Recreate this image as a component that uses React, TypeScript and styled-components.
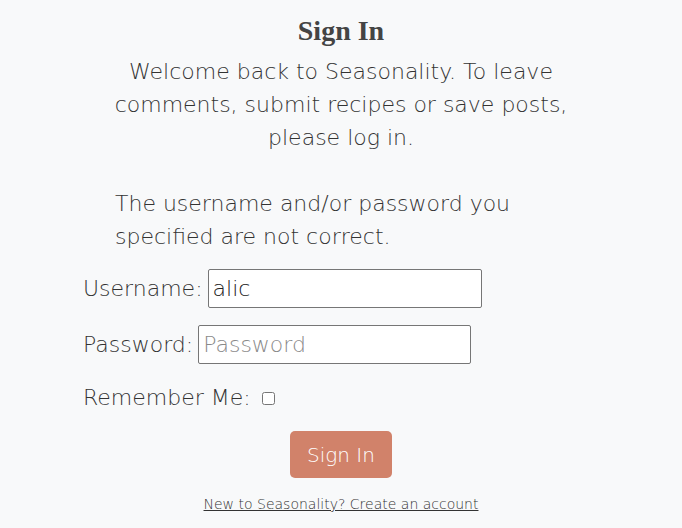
import styled, { createGlobalStyle } from "styled-components";

const GlobalStyle = createGlobalStyle`
  body {
    margin: 0;
    background: #f8f9fa;
    color: #333;
    font-family: "DejaVu Sans", "Open Sans", sans-serif;
    font-weight: 200;
  }
`;

const Container = styled.main`
  width: 516px;
  margin: 0 auto;
  padding: 14px 12px 0;
`;

const Title = styled.h2`
  margin: 0 0 8px;
  text-align: center;
  font-family: "Liberation Serif", "DejaVu Serif", serif;
  font-weight: 700;
  font-size: 28px;
  line-height: 33px;
  color: #444;
`;

const Intro = styled.p`
  margin: 0 0 33px;
  text-align: center;
  font-size: 22px;
  line-height: 33px;
`;

const ErrorList = styled.ul`
  list-style: none;
  margin: 0 0 16px;
  padding-left: 32px;
  font-size: 22px;
  line-height: 33px;
`;

const Form = styled.form`
  display: flex;
  flex-direction: column;
`;

const FieldRow = styled.p`
  display: flex;
  align-items: center;
  gap: 5px;
  margin: 0 0 17px;
  font-size: 22px;
  line-height: 33px;
`;

const Input = styled.input<{ $width: number }>`
  box-sizing: border-box;
  width: ${(p) => p.$width}px;
  height: 39px;
  padding: 0 4px;
  border: 1px solid #767676;
  border-radius: 2px;
  background: #fff;
  font-family: inherit;
  font-weight: 200;
  font-size: 22px;
  color: #222;

  &::placeholder {
    color: #8a8a8a;
  }
`;

const Checkbox = styled.input`
  width: 13px;
  height: 13px;
  margin: 2px 0 0 6px;
`;

const Submit = styled.button`
  align-self: center;
  margin-top: 0;
  width: 102px;
  height: 47px;
  border: none;
  border-radius: 5px;
  background: #d1826a;
  color: #fff;
  font-family: inherit;
  font-weight: 200;
  font-size: 20px;
  cursor: pointer;
`;

const SignupLink = styled.a`
  display: block;
  margin-top: 18px;
  text-align: center;
  font-size: 14px;
  color: #333;
  text-decoration: underline;
`;

export default function App() {
  return (
    <>
      <GlobalStyle />
      <Container>
        <Title>Sign In</Title>
        <Intro>
          Welcome back to Seasonality. To leave comments, submit recipes or
          save posts, please log in.
        </Intro>
        <ErrorList>
          <li>The username and/or password you specified are not correct.</li>
        </ErrorList>
        <Form onSubmit={(e) => e.preventDefault()}>
          <FieldRow>
            <label htmlFor="id_login">Username:</label>
            <Input id="id_login" $width={274} defaultValue="alic" />
          </FieldRow>
          <FieldRow>
            <label htmlFor="id_password">Password:</label>
            <Input
              id="id_password"
              type="password"
              $width={273}
              placeholder="Password"
            />
          </FieldRow>
          <FieldRow>
            <label htmlFor="id_remember">Remember Me:</label>
            <Checkbox id="id_remember" type="checkbox" />
          </FieldRow>
          <Submit type="submit">Sign In</Submit>
        </Form>
        <SignupLink href="#">New to Seasonality? Create an account</SignupLink>
      </Container>
    </>
  );
}
